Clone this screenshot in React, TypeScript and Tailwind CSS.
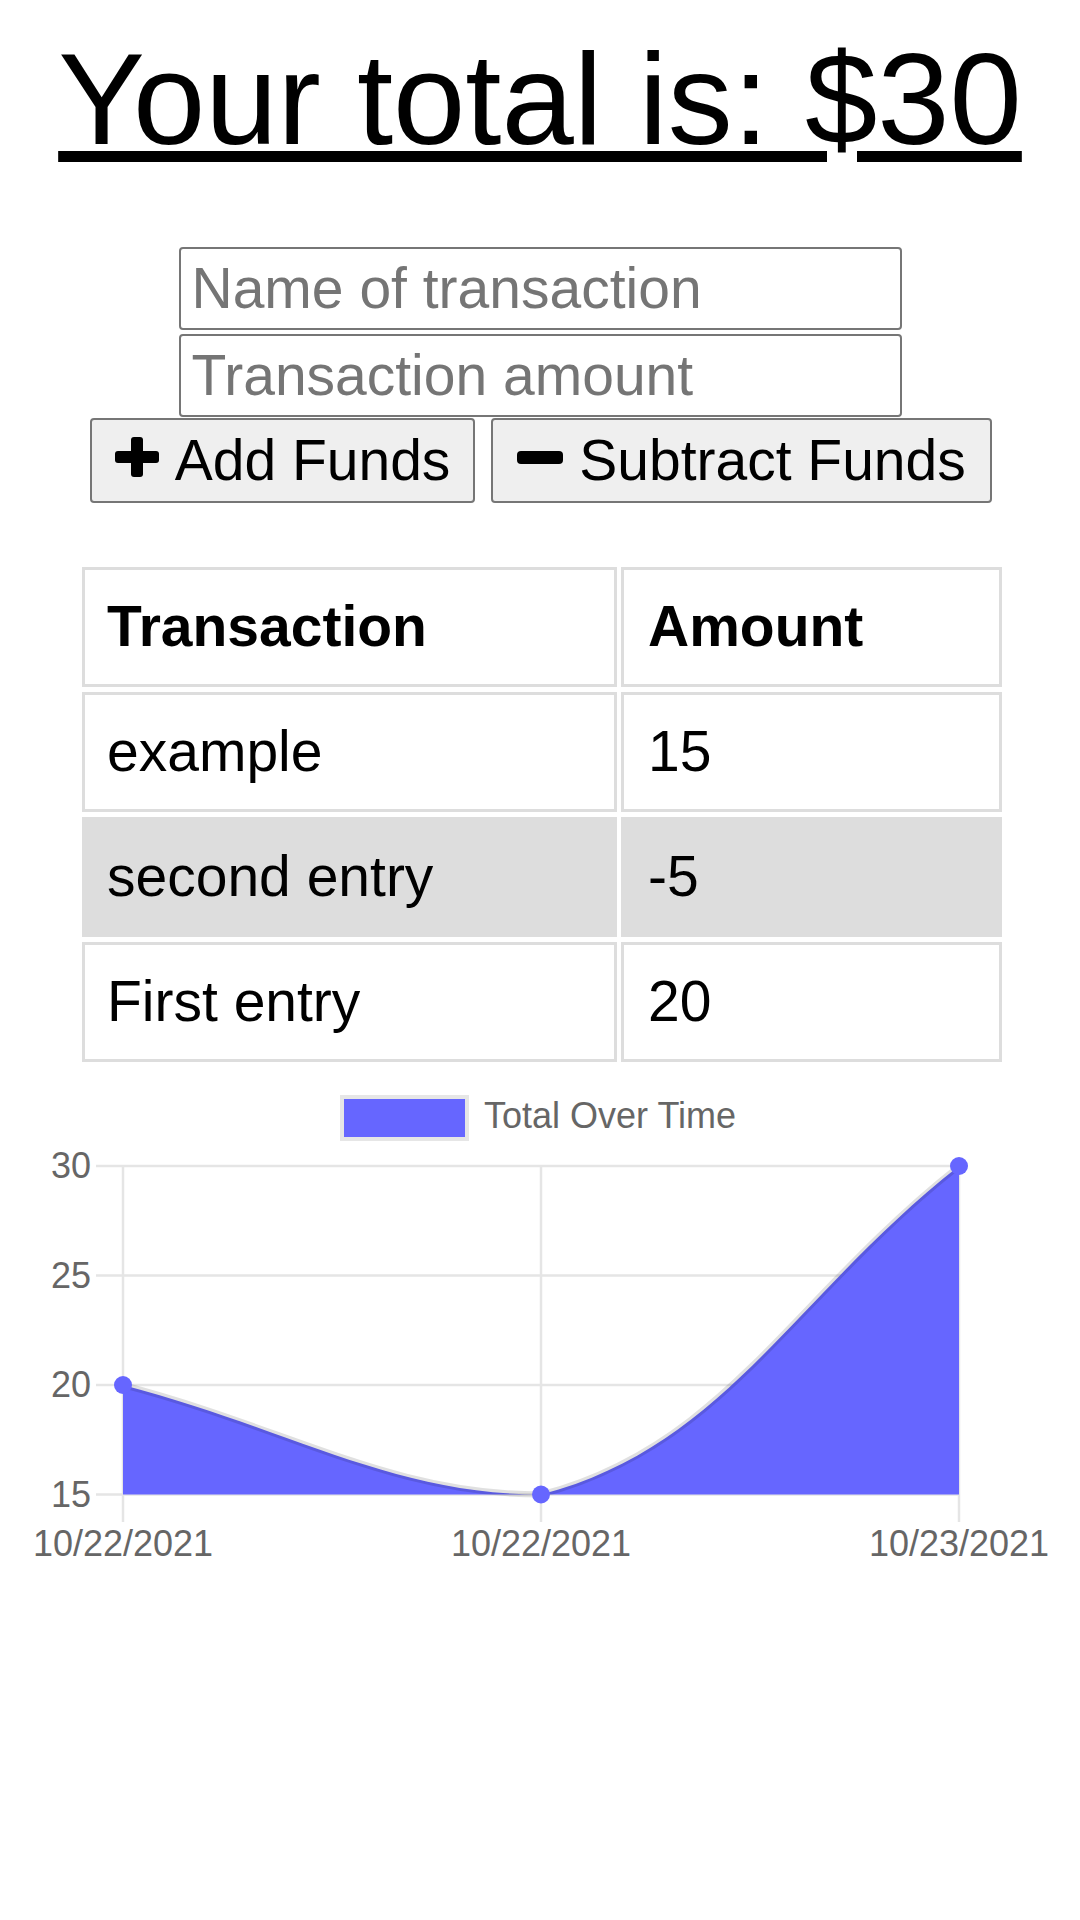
import React from 'react';

const rows = [
  { name: 'example', amount: '15', shaded: false },
  { name: 'second entry', amount: '-5', shaded: true },
  { name: 'First entry', amount: '20', shaded: false },
];

function PlusIcon() {
  return (
    <svg width="44" height="40" viewBox="0 0 44 40" className="shrink-0 -translate-y-[4px]">
      <rect x="16" y="0" width="12" height="40" rx="3" fill="#000" />
      <rect x="0" y="14" width="44" height="12" rx="3" fill="#000" />
    </svg>
  );
}

function MinusIcon() {
  return (
    <svg width="46" height="13" viewBox="0 0 46 13" className="shrink-0 -translate-y-[3px]">
      <rect x="0" y="0" width="46" height="13" rx="4" fill="#000" />
    </svg>
  );
}

function Chart() {
  // page y minus 1080
  const xs = [123, 541, 959];
  const ys: Record<string, number> = { '30': 86, '25': 195.5, '20': 305, '15': 414.5 };
  const curve = 'M123,305 C290.2,348.8 391.1,414.5 541,414.5 C725.5,366.2 791.8,217.4 959,86';
  const grid = '#e5e5e5';
  return (
    <svg width="1080" height="500" viewBox="0 0 1080 500" className="block" fontFamily="'Liberation Sans', Arial, sans-serif">
      {/* legend */}
      <rect x="342" y="17" width="125" height="42" fill="#6666ff" stroke="#e6e6e6" strokeWidth="4" />
      <text x="484" y="48" fontSize="36" fill="#666">Total Over Time</text>

      {/* grid */}
      {Object.entries(ys).map(([label, y]) => (
        <g key={label}>
          <line x1="96" x2="959" y1={y} y2={y} stroke={grid} strokeWidth="2.5" />
          <text x="91" y={y + 12} fontSize="36" fill="#666" textAnchor="end">{label}</text>
        </g>
      ))}
      {xs.map((x) => (
        <line key={x} x1={x} x2={x} y1="86" y2="442" stroke={grid} strokeWidth="2.5" />
      ))}

      {/* data */}
      <path d={`${curve} L959,414.5 L123,414.5 Z`} fill="#6666ff" />
      <path d={curve} fill="none" stroke="rgba(0,0,0,0.12)" strokeWidth="6" />
      <circle cx="123" cy="305" r="9" fill="#6666ff" />
      <circle cx="541" cy="414.5" r="9" fill="#6666ff" />
      <circle cx="959" cy="86" r="9" fill="#6666ff" />

      {['10/22/2021', '10/22/2021', '10/23/2021'].map((d, i) => (
        <text key={i} x={xs[i]} y="476" fontSize="36" fill="#666" textAnchor="middle">{d}</text>
      ))}
    </svg>
  );
}

export default function App() {
  return (
    <div className="min-h-[1920px] w-full bg-white pt-[25px] font-['Liberation_Sans',Arial,sans-serif] text-black">
      <h1 className="text-center text-[130px] leading-[148px] font-normal underline decoration-[11px] underline-offset-[7px]">
        Your total is: $30
      </h1>

      {/* form */}
      <div className="mt-[74px] flex flex-col items-center">
        <input
          type="text"
          placeholder="Name of transaction"
          className="h-[83px] w-[723px] rounded-[4px] border-2 border-[#767676] bg-white px-[11px] text-[57px] placeholder:text-[#757575]"
        />
        <input
          type="text"
          placeholder="Transaction amount"
          className="mt-[4px] h-[83px] w-[723px] rounded-[4px] border-2 border-[#767676] bg-white px-[11px] text-[57px] placeholder:text-[#757575]"
        />
        <div className="mt-[1px] flex gap-[16px] pl-[2px]">
          <button className="flex h-[85px] w-[385px] items-center justify-center gap-[16px] rounded-[4px] border-2 border-[#767676] bg-[#efefef] text-[57px]">
            <PlusIcon />
            <span>Add Funds</span>
          </button>
          <button className="flex h-[85px] w-[501px] items-center justify-center gap-[16px] rounded-[4px] border-2 border-[#767676] bg-[#efefef] text-[57px]">
            <MinusIcon />
            <span>Subtract Funds</span>
          </button>
        </div>
      </div>

      {/* transactions */}
      <table className="mt-[59px] ml-[78px] w-[928px] table-fixed border-separate border-spacing-x-[4px] border-spacing-y-[5px] text-[57px]">
        <thead>
          <tr>
            <th className="h-[120px] w-[535px] border-[3px] border-[#dddddd] px-[22px] text-left font-bold">Transaction</th>
            <th className="h-[120px] w-[381px] border-[3px] border-[#dddddd] px-[24px] text-left font-bold">Amount</th>
          </tr>
        </thead>
        <tbody>
          {rows.map((r) => (
            <tr key={r.name} className={r.shaded ? 'bg-[#dddddd]' : ''}>
              <td className="h-[120px] border-[3px] border-[#dddddd] px-[22px]">{r.name}</td>
              <td className="h-[120px] border-[3px] border-[#dddddd] px-[24px]">{r.amount}</td>
            </tr>
          ))}
        </tbody>
      </table>

      <div className="mt-[13px]">
        <Chart />
      </div>
    </div>
  );
}
